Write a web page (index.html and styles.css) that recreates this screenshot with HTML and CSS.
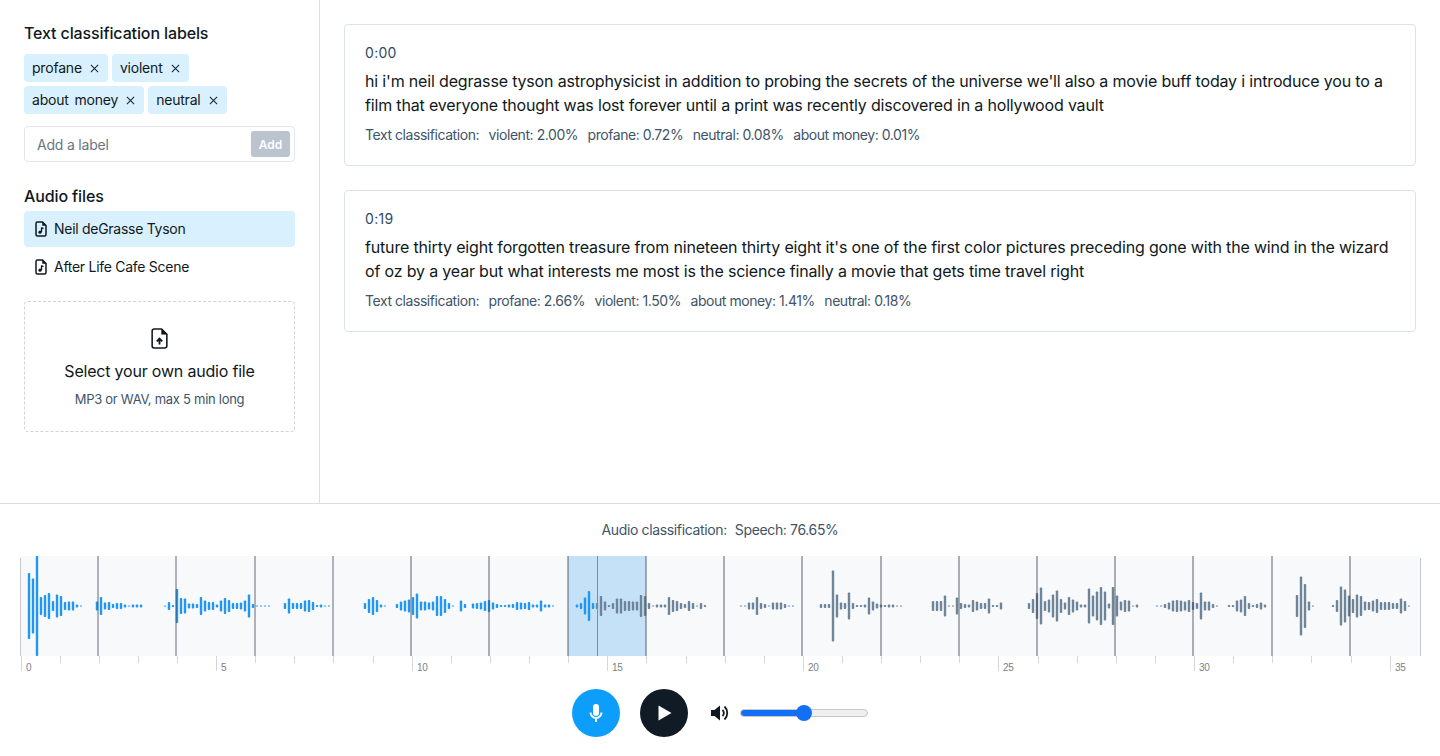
FILE: index.html
```html
<!DOCTYPE html>
<html lang="en">
  <head>
    <meta charset="UTF-8" />
    <meta name="viewport" content="width=device-width, initial-scale=1.0" />
    <title>Audio classification</title>
    <link rel="stylesheet" href="styles.css">
  </head>
  <body>
    <div class="top">
      <aside class="sidebar">
        <h2 class="heading">Text classification labels</h2>
        <div class="tags">
          <span class="tag">profane <svg class="tag-x" viewBox="0 0 10 10"><path d="M1 1l8 8M9 1l-8 8"/></svg></span>
          <span class="tag">violent <svg class="tag-x" viewBox="0 0 10 10"><path d="M1 1l8 8M9 1l-8 8"/></svg></span>
          <span class="tag">about money <svg class="tag-x" viewBox="0 0 10 10"><path d="M1 1l8 8M9 1l-8 8"/></svg></span>
          <span class="tag">neutral <svg class="tag-x" viewBox="0 0 10 10"><path d="M1 1l8 8M9 1l-8 8"/></svg></span>
        </div>
        <div class="label-form">
          <input class="label-input" type="text" placeholder="Add a label" />
          <button class="label-add" disabled>Add</button>
        </div>

        <h2 class="heading files-heading">Audio files</h2>
        <div class="file-row active">
          <svg class="file-icon" viewBox="0 0 12 16"><path class="doc" d="M7.500 1H2.500A1.500 1.500 0 0 0 1 2.500v11A1.500 1.500 0 0 0 2.500 15h7a1.500 1.500 0 0 0 1.500-1.500V4.500z"/><path class="fold" d="M7.500 1v3.500H11z"/><path class="note" d="M6.500 6.500v4.500M6.500 6.700l2 .9"/><circle class="note-head" cx="5" cy="11.200" r="1.600"/></svg>
          <span class="file-name">Neil deGrasse Tyson</span>
        </div>
        <div class="file-row">
          <svg class="file-icon" viewBox="0 0 12 16"><path class="doc" d="M7.500 1H2.500A1.500 1.500 0 0 0 1 2.500v11A1.500 1.500 0 0 0 2.500 15h7a1.500 1.500 0 0 0 1.500-1.500V4.500z"/><path class="fold" d="M7.500 1v3.500H11z"/><path class="note" d="M6.500 6.500v4.500M6.500 6.700l2 .9"/><circle class="note-head" cx="5" cy="11.200" r="1.600"/></svg>
          <span class="file-name">After Life Cafe Scene</span>
        </div>
        <div class="dropzone">
          <svg class="upload-icon" viewBox="0 0 16 20"><path class="doc" d="M10 1H2.800A1.800 1.800 0 0 0 1 2.800v14.400A1.800 1.800 0 0 0 2.800 19h10.400a1.800 1.800 0 0 0 1.800-1.800V6z"/><path class="fold" d="M10 1v5h5z"/><path class="arrow" d="M8 15.800V10.500M5.400 12.800L8 10.200l2.600 2.600"/></svg>
          <div class="drop-title">Select your own audio file</div>
          <div class="drop-sub">MP3 or WAV, max 5 min long</div>
        </div>
      </aside>

      <main class="transcript">
        <section class="card">
          <div class="time">0:00</div>
          <p class="line">hi i'm neil degrasse tyson astrophysicist in addition to probing the secrets of the universe we'll also a movie buff today i introduce you to a film that everyone thought was lost forever until a print was recently discovered in a hollywood vault</p>
          <div class="scores"><span>Text classification:</span><span>violent: 2.00%</span><span>profane: 0.72%</span><span>neutral: 0.08%</span><span>about money: 0.01%</span></div>
        </section>
        <section class="card">
          <div class="time">0:19</div>
          <p class="line">future thirty eight forgotten treasure from nineteen thirty eight it's one of the first color pictures preceding gone with the wind in the wizard of oz by a year but what interests me most is the science finally a movie that gets time travel right</p>
          <div class="scores"><span>Text classification:</span><span>profane: 2.66%</span><span>violent: 1.50%</span><span>about money: 1.41%</span><span>neutral: 0.18%</span></div>
        </section>
      </main>
    </div>

    <footer class="player">
      <div class="audio-score"><span>Audio classification:</span><span>Speech: 76.65%</span></div>
      <div class="wave" id="wave"></div>
      <div class="controls">
        <button class="round mic">
          <svg viewBox="0 0 24 24"><path d="M12 3a3 3 0 0 0-3 3v6a3 3 0 0 0 6 0V6a3 3 0 0 0-3-3z"/><path class="mic-arc" d="M6.500 11.500a5.500 5.500 0 0 0 11 0M12 17v4"/></svg>
        </button>
        <button class="round play">
          <svg viewBox="0 0 24 24"><path d="M6.500 4.500v15l13-7.500z"/></svg>
        </button>
        <svg class="volume" viewBox="0 0 20 20"><path class="speaker" d="M1 7h3.500L10 2.500v15L4.500 13H1z"/><path class="sound" d="M12.500 7a4 4 0 0 1 0 6M14.500 3.500a9 9 0 0 1 0 13"/></svg>
        <input class="volume-range" type="range" min="0" max="100" value="50" />
      </div>
    </footer>

    <script src="wave.js"></script>
  </body>
</html>
```

FILE: styles.css
```css
* {
  box-sizing: border-box;
  margin: 0;
  padding: 0;
}
body {
  display: flex;
  flex-direction: column;
  height: 100vh;
  overflow: hidden;
  background: #fff;
  color: #101820;
  font-family: Inter, "Noto Sans", Arial, sans-serif;
  font-size: 14px;
  letter-spacing: -0.2px;
}

.top {
  display: flex;
  height: 504px;
  border-bottom: 1px solid #dcdfe3;
}

/* left column */
.sidebar {
  width: 320px;
  flex: none;
  padding: 24px 24px 0;
  border-right: 1px solid #dcdfe3;
}
.heading {
  font-size: 16px;
  font-weight: 500;
  line-height: 18px;
  letter-spacing: -0.12px;
}
.files-heading {
  margin-top: 25px;
}
.tags {
  display: flex;
  flex-wrap: wrap;
  gap: 4px;
  margin-top: 12px;
}
.tag {
  display: flex;
  align-items: center;
  gap: 8px;
  height: 28px;
  padding: 0 9px 0 8px;
  border-radius: 4px;
  background: #d9f1ff;
  line-height: 28px;
  word-spacing: 2px;
}
.tag-x {
  width: 9px;
  height: 9px;
  fill: none;
  stroke: #1b2733;
  stroke-width: 1.2;
}
.label-form {
  display: flex;
  align-items: center;
  width: 271px;
  height: 36px;
  margin-top: 12px;
  padding: 0 4px 0 12px;
  border: 1.5px solid #e2e6ea;
  border-radius: 4px;
}
.label-input {
  flex: 1;
  min-width: 0;
  border: none;
  outline: none;
  font: inherit;
  letter-spacing: inherit;
}
.label-input::placeholder {
  color: #6c757d;
}
.label-add {
  width: 39px;
  height: 26px;
  border: none;
  border-radius: 3px;
  background: #b9c4ce;
  color: #fff;
  font: 600 12px Inter, sans-serif;
}
.file-row {
  display: flex;
  align-items: center;
  gap: 7px;
  width: 271px;
  height: 36px;
  margin-top: 2px;
  padding-left: 11px;
  border-radius: 4px;
}
.file-row.active {
  margin-top: 6px;
  background: #d9f1ff;
}
.file-name {
  margin-top: -1px;
  letter-spacing: -0.28px;
}
.file-icon {
  width: 12px;
  height: 16px;
  flex: none;
}
.doc {
  fill: none;
  stroke: #101820;
  stroke-width: 1.500;
  stroke-linejoin: round;
}
.fold {
  fill: #101820;
  stroke: #101820;
  stroke-width: 0.5;
  stroke-linejoin: round;
}
.note,
.arrow {
  fill: none;
  stroke: #101820;
  stroke-width: 1.300;
}
.arrow {
  stroke-width: 1.800;
}
.note-head {
  fill: #101820;
}
.dropzone {
  display: flex;
  flex-direction: column;
  align-items: center;
  width: 271px;
  height: 131px;
  margin-top: 16px;
  padding-top: 26px;
  border: 1px dashed #ced4da;
  border-radius: 4px;
}
.upload-icon {
  width: 17px;
  height: 21px;
}
.drop-title {
  margin-top: 10px;
  font-size: 16px;
  line-height: 24px;
}
.drop-sub {
  margin-top: 6px;
  color: #3e5468;
  font-size: 13px;
  line-height: 20px;
  letter-spacing: -0.28px;
}

/* transcript */
.transcript {
  flex: 1;
  padding: 24px 24px 0;
}
.card {
  height: 142px;
  margin-bottom: 24px;
  padding: 20px;
  border: 1px solid #dde2e7;
  border-radius: 4px;
}
.time {
  color: #2f4a63;
  line-height: 16px;
  letter-spacing: 0.3px;
}
.line {
  margin-top: 8px;
  font-size: 16px;
  line-height: 24px;
  letter-spacing: -0.17px;
}
.scores {
  display: flex;
  gap: 9.5px;
  margin-top: 9px;
  color: #3e5468;
  line-height: 18px;
  letter-spacing: -0.44px;
}

/* bottom player */
.player {
  flex: 1;
  min-height: 0;
}
.audio-score {
  display: flex;
  justify-content: center;
  gap: 8px;
  margin-top: 17px;
  color: #3e5468;
  line-height: 18px;
  letter-spacing: -0.36px;
}
.wave {
  height: 118px;
  margin-top: 17px;
}
.wave svg {
  display: block;
  width: 1440px;
  height: 118px;
}
.tick-label {
  fill: #7b7f85;
  font: 10px Arial, "Liberation Sans", sans-serif;
}
.controls {
  display: flex;
  align-items: center;
  justify-content: center;
  gap: 20px;
  margin-top: 15px;
}
.round {
  display: flex;
  align-items: center;
  justify-content: center;
  width: 48px;
  height: 48px;
  border: none;
  border-radius: 50%;
}
.round.mic {
  background: #0d9dfb;
}
.round.play {
  background: #101b26;
}
.round svg {
  width: 24px;
  height: 24px;
  fill: #fff;
}
.mic-arc {
  fill: none;
  stroke: #fff;
  stroke-width: 2;
}
.volume {
  width: 20px;
  height: 20px;
  margin-left: 2px;
}
.speaker {
  fill: #101820;
}
.sound {
  fill: none;
  stroke: #101820;
  stroke-width: 1.800;
}
.volume-range {
  width: 128px;
  height: 8px;
  margin: 0 0 0 -10px;
  border: 1px solid #c8c8c8;
  border-radius: 4px;
  background: linear-gradient(to right, #1170f5 50%, #efefef 50%);
  appearance: none;
}
.volume-range::-webkit-slider-thumb {
  width: 16px;
  height: 16px;
  border-radius: 50%;
  background: #1170f5;
  appearance: none;
}
```

FILE: wave.js
```js
// bar heights in px, one bar every 4px starting at x = 29
const bars = [
  66, 55, 100, 18, 22, 26, 10, 23, 20, 8, 9, 9, 3, 1, 0, 0, 0, 9, 18, 7, 8, 4, 6, 6, 3, 1, 3, 3, 3,
  0, 0, 0, 0, 0, 1, 8, 2, 34, 16, 15, 5, 5, 4, 18, 11, 8, 8, 3, 11, 16, 12, 6, 6, 7, 11, 23, 4, 1, 1, 1, 1,
  0, 0, 0, 6, 15, 6, 6, 6, 11, 12, 8, 2, 3, 1, 1,
  0, 0, 0, 0, 0, 0, 0, 0,
  6, 14, 18, 12, 3, 1, 0, 0, 4, 9, 11, 13, 18, 25, 9, 9, 7, 9, 20, 20, 14, 6, 1, 0, 11, 4, 0, 5, 6, 7, 10, 12,
  7, 4, 2, 2, 3, 4, 8, 7, 6, 8, 3, 3, 11, 3, 3, 1, 0, 0, 0, 0, 0, 3, 6, 17, 30, 6, 6,
  20, 9, 2, 6, 15, 15, 10, 10, 9, 9, 22, 20, 6, 1, 3, 3, 3, 18, 12, 10, 6, 4, 10, 6, 1, 6, 2,
  0, 0, 0, 0, 0, 0, 0, 0,
  1, 1, 7, 7, 18, 6, 4, 1, 7, 7, 7, 4, 1, 1, 0, 0, 0, 0, 0, 0, 4, 4, 4, 71, 23, 7, 6, 27, 6, 2, 2, 3, 17, 9, 5, 3, 2, 3, 3, 1, 1,
  0, 0, 0, 0, 0, 0, 0, 10, 10, 10, 21, 1, 1, 17, 6, 4, 3, 12, 9, 6, 6, 15, 2, 2, 7,
  0, 0, 0, 0, 0, 0, 6, 14, 26, 37, 10, 13, 23, 31, 14, 7, 18, 13, 9,
  3, 3, 35, 21, 29, 38, 29, 5, 38, 21, 9, 12, 11, 1, 3, 0, 0, 0, 0, 1, 1, 4, 7, 11, 12, 11, 9, 12, 8, 6, 27, 9, 9, 4, 1,
  0, 0, 2, 2, 11, 13, 20, 6, 2, 4, 7, 3, 0, 0, 0, 0, 0, 0, 0, 22, 59, 44, 9, 1, 0, 0, 0, 0, 2, 12, 39, 33, 21, 14, 23, 20, 9, 8, 11, 14, 8, 8, 8, 6, 6, 15, 10, 1
];

const playedUntil = 597;
const regionEdges = [98, 176, 255, 333, 411, 489, 568, 646, 724, 802, 881, 959, 1037, 1115, 1193, 1272, 1350];
const mid = 50;
const secondWidth = 39.12;

let svg = `<rect x="20" width="1400" height="100" fill="#f8f9fb"/>`;
svg += `<rect x="568" width="78" height="100" fill="#c5e1f8"/>`;

bars.forEach((h, i) => {
  if (!h) return;
  const x = 29 + i * 4;
  const color = x < playedUntil ? "#2196f3" : "#6d8499";
  svg += `<rect x="${x - 1.2}" y="${mid - h / 2}" width="2.4" height="${h}" rx="0.8" fill="${color}"/>`;
});

regionEdges.forEach((x) => {
  // the first few lines land between pixels in the original, so they read wider and paler
  const wide = x < 340;
  const w = wide ? 1.6 : 1;
  svg += `<rect x="${x - w / 2}" width="${w}" height="100" fill="#3f4a55" opacity="${wide ? 0.5 : 0.85}"/>`;
});
svg += `<rect x="20" y="2" width="1" height="98" fill="#c4c8cc"/>`;
svg += `<rect x="1420" y="2" width="1" height="98" fill="#c4c8cc"/>`;
svg += `<rect x="${playedUntil}" width="1" height="100" fill="#cf6a76"/>`;

for (let s = 0; s <= 35; s++) {
  const x = Math.round(20.5 + s * secondWidth);
  const major = s % 5 === 0;
  svg += `<rect x="${x}" y="100" width="1" height="${major ? 15 : 7}" fill="#d4d6d9"/>`;
  if (major) {
    svg += `<text class="tick-label" x="${x + 5}" y="115">${s}</text>`;
  }
}

document.getElementById("wave").innerHTML =
  `<svg viewBox="0 0 1440 118">${svg}</svg>`;
```
